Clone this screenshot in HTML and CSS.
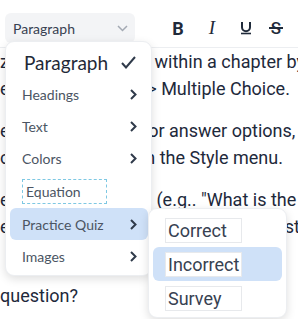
FILE: index.html
```html
<!DOCTYPE html>
<html lang="en">
<head>
  <meta charset="UTF-8" />
  <meta name="viewport" content="width=device-width, initial-scale=1.0" />
  <title>Editor – Style menu</title>
<link rel="stylesheet" href="styles.css">
</head>
<body>

<div class="editor">

  <!-- toolbar -->
  <div class="toolbar">
    <button class="block-select">
      <span>Paragraph</span>
      <svg width="11" height="7" viewBox="0 0 11 7"><polyline points="1,1 5.5,5.5 10,1" fill="none" stroke="#a3a9b3" stroke-width="1.5"/></svg>
    </button>
    <div class="marks">
      <span class="mark mark-bold">B</span>
      <span class="mark mark-italic">I</span>
      <span class="mark mark-underline">
        <svg width="12" height="14" viewBox="0 0 12 14"><path d="M2 1v5.2a4 4 0 0 0 8 0V1" fill="none" stroke="#1f2a3a" stroke-width="2"/><line x1="1" y1="12.5" x2="11" y2="12.5" stroke="#1f2a3a" stroke-width="1.6"/></svg>
      </span>
      <span class="mark mark-strike">S</span>
    </div>
  </div>

  <!-- document -->
  <div class="doc">
    <p>zes can be created within a chapter by selecting<br>either Style &gt; Quiz &gt; Multiple Choice.</p>
    <p>enter a question. For answer options,<br>choose each role in the Style menu.</p>
    <p>enter your prompts (e.g.. "What is the<br>element with symbol O?") as its question</p>
    <p class="doc-tail">question?</p>
  </div>

  <!-- style menu -->
  <div class="menu">
    <div class="menu-item menu-item--current">
      <span>Paragraph</span>
      <svg width="15" height="13" viewBox="0 0 15 13"><polyline points="1,7 5,11.5 14,1" fill="none" stroke="#2f3a4a" stroke-width="2"/></svg>
    </div>
    <div class="menu-item"><span>Headings</span><svg class="chev" width="7" height="11" viewBox="0 0 7 11"><polyline points="1,1 5.5,5.5 1,10" fill="none" stroke="#2f3a4a" stroke-width="2"/></svg></div>
    <div class="menu-item"><span>Text</span><svg class="chev" width="7" height="11" viewBox="0 0 7 11"><polyline points="1,1 5.5,5.5 1,10" fill="none" stroke="#2f3a4a" stroke-width="2"/></svg></div>
    <div class="menu-item"><span>Colors</span><svg class="chev" width="7" height="11" viewBox="0 0 7 11"><polyline points="1,1 5.5,5.5 1,10" fill="none" stroke="#2f3a4a" stroke-width="2"/></svg></div>
    <div class="menu-item menu-item--eq"><span class="equation-box">Equation</span></div>
    <div class="menu-item menu-item--open"><span>Practice Quiz</span><svg class="chev" width="7" height="11" viewBox="0 0 7 11"><polyline points="1,1 5.5,5.5 1,10" fill="none" stroke="#2f3a4a" stroke-width="2"/></svg></div>
    <div class="menu-item"><span>Images</span><svg class="chev" width="7" height="11" viewBox="0 0 7 11"><polyline points="1,1 5.5,5.5 1,10" fill="none" stroke="#2f3a4a" stroke-width="2"/></svg></div>
  </div>

  <!-- practice quiz submenu -->
  <div class="submenu">
    <div class="sub-item"><span class="quiz-tag">Correct</span></div>
    <div class="sub-item sub-item--active"><span class="quiz-tag">Incorrect</span></div>
    <div class="sub-item"><span class="quiz-tag">Survey</span></div>
  </div>

</div>

</body>
</html>
```

FILE: styles.css
```css
  /* ─── page base ─────────────────────────────────────────── */
  body {
    margin: 0;
    width: 298px;
    height: 319px;
    overflow: hidden;
    background: #fff;
    font-family: Roboto, "Liberation Sans", sans-serif;
  }

  .editor {
    position: relative;
    height: 319px;
  }

  /* ─── toolbar ───────────────────────────────────────────── */
  .toolbar {
    display: flex;
    align-items: flex-start;
    height: 48px;
    box-sizing: border-box;
    padding: 13px 0 0 5px;
    border-bottom: 1px solid #eceef1;
  }

  .block-select {
    display: flex;
    align-items: center;
    justify-content: space-between;
    width: 130px;
    height: 30px;
    box-sizing: border-box;
    padding: 0 7px 0 8px;
    border: 0;
    border-radius: 6px;
    background: #f3f4f6;
    font: 14px Lato, "Noto Sans", sans-serif;
    color: #374151;
  }

  .marks {
    display: flex;
    align-items: center;
    height: 30px;
    margin-left: 26px;
  }

  .mark {
    display: flex;
    justify-content: center;
    align-items: center;
    width: 34px;
    height: 30px;
    color: #1f2a3a;
  }

  .mark-bold {
    font-size: 18px;
    font-weight: 700;
  }

  .mark-italic {
    font: italic 19px "Liberation Serif", serif;
  }

  .mark-strike {
    position: relative;
    width: 26px;
    font-size: 17px;
    font-weight: 500;
  }

  .mark-strike::after {
    content: "";
    position: absolute;
    left: 6px;
    right: 6px;
    top: 14px;
    height: 2px;
    background: #1f2a3a;
  }

  /* ─── document ──────────────────────────────────────────── */
  .doc {
    overflow: hidden;
    font-size: 18px;
    line-height: 27px;
    color: #1e293b;
    white-space: nowrap;
  }

  .doc p {
    margin: 0 0 15px;
  }

  .doc .doc-tail {
    margin-top: 42px;
  }

  /* ─── style menu ────────────────────────────────────────── */
  .menu {
    position: absolute;
    top: 41px;
    left: 5px;
    z-index: 2;
    width: 147px;
    box-sizing: border-box;
    padding: 4px 3px 3px 4px;
    background: #fff;
    border: 1px solid #eceef1;
    border-radius: 9px;
    box-shadow: 0 3px 10px rgba(0, 0, 0, 0.13);
    font: 14px Lato, "Noto Sans", sans-serif;
    color: #4b5563;
  }

  .menu-item {
    display: flex;
    align-items: center;
    justify-content: space-between;
    height: 32px;
    padding: 0 11px 0 12px;
    border-radius: 6px;
  }

  .menu-item--current {
    padding: 0 12px 0 14px;
    font-size: 19px;
    color: #1f2937;
  }

  .menu-item--eq {
    height: 34px;
  }

  .menu-item--open {
    background: #cfe1f8;
  }

  .equation-box {
    display: flex;
    align-items: center;
    width: 85px;
    height: 25px;
    box-sizing: border-box;
    padding-left: 3px;
    border: 1px dashed #7ec8e3;
  }

  /* ─── quiz submenu ──────────────────────────────────────── */
  .submenu {
    position: absolute;
    top: 208px;
    left: 148px;
    z-index: 3;
    width: 139px;
    box-sizing: border-box;
    padding: 4px 4px 2px;
    background: #fff;
    border: 1px solid #eceef1;
    border-radius: 9px;
    box-shadow: 0 3px 10px rgba(0, 0, 0, 0.13);
  }

  .sub-item {
    display: flex;
    align-items: center;
    height: 34px;
    padding-left: 12px;
    border-radius: 6px;
  }

  .sub-item--active {
    background: #cfe1f8;
  }

  .quiz-tag {
    display: flex;
    align-items: center;
    width: 77px;
    height: 25px;
    box-sizing: border-box;
    padding-left: 2px;
    border: 1px solid #e7e9ec;
    background: #fff;
    font-size: 18px;
    color: #374151;
  }
```
